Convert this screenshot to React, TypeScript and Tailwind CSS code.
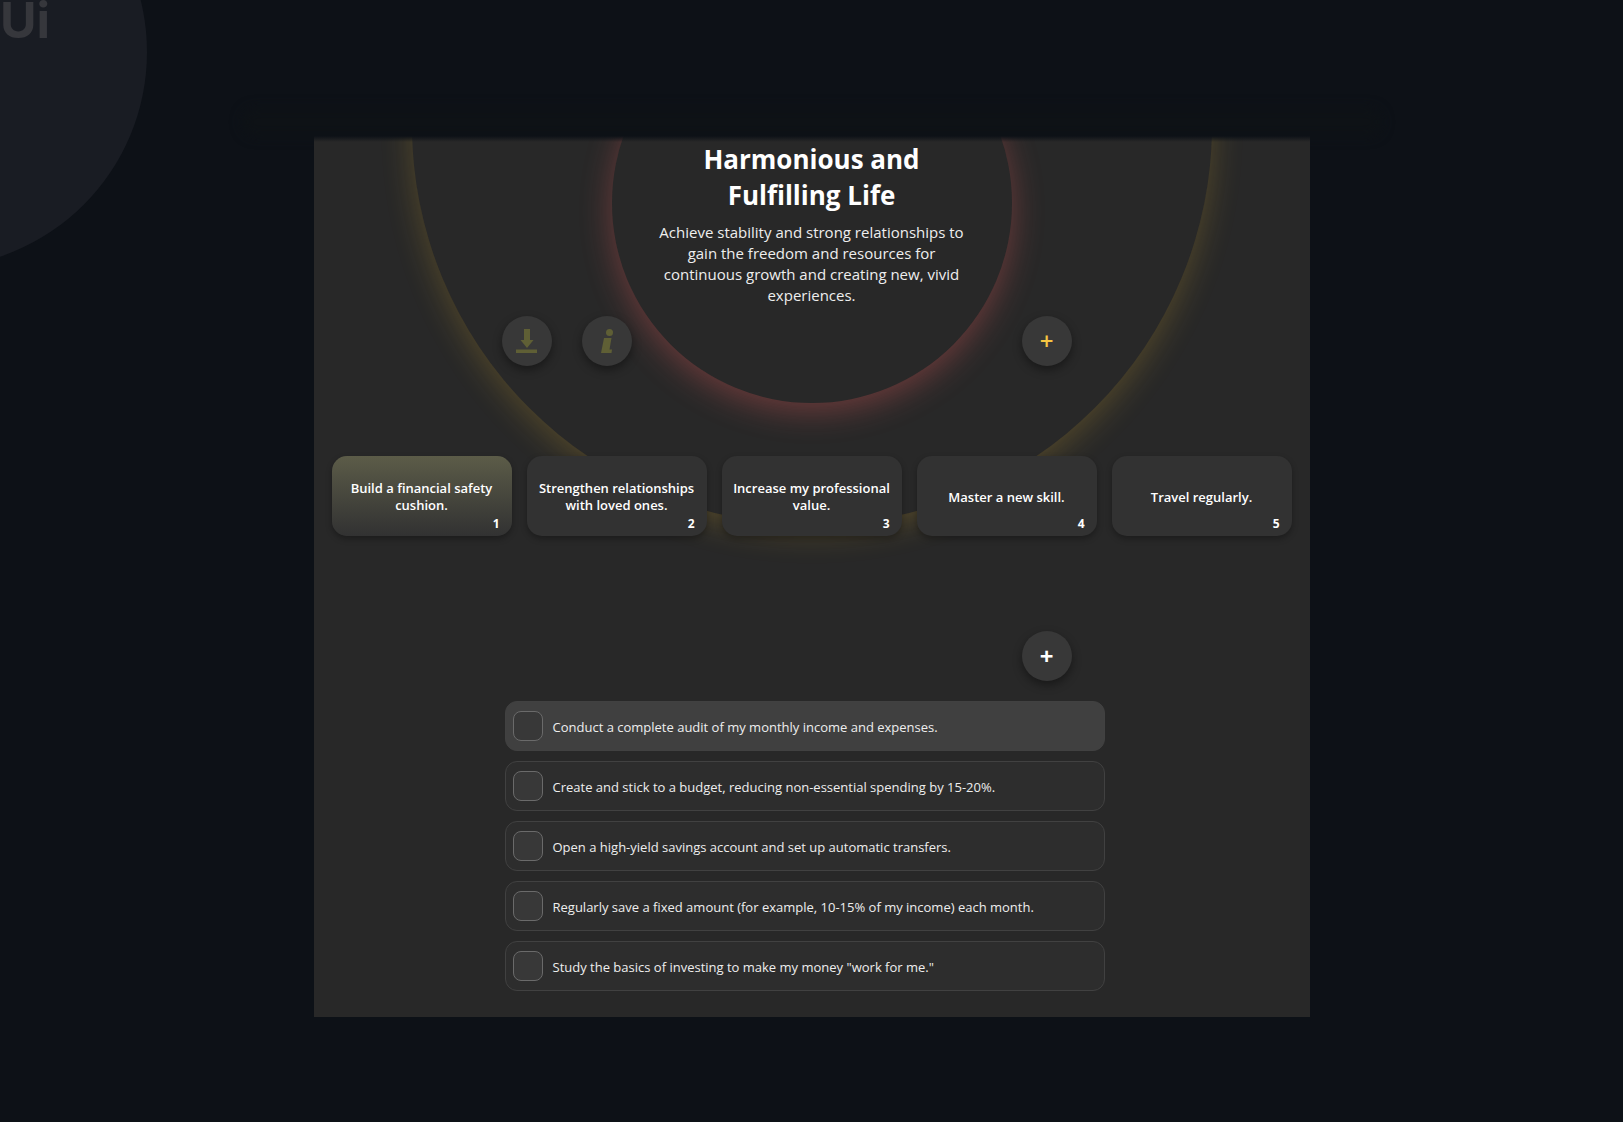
import React from "react";

const goals = [
  "Build a financial safety cushion.",
  "Strengthen relationships with loved ones.",
  "Increase my professional value.",
  "Master a new skill.",
  "Travel regularly.",
];

const tasks = [
  "Conduct a complete audit of my monthly income and expenses.",
  "Create and stick to a budget, reducing non-essential spending by 15-20%.",
  "Open a high-yield savings account and set up automatic transfers.",
  "Regularly save a fixed amount (for example, 10-15% of my income) each month.",
  'Study the basics of investing to make my money "work for me."',
];

function RoundButton({
  label,
  className = "",
  children,
}: {
  label: string;
  className?: string;
  children: React.ReactNode;
}) {
  return (
    <button
      type="button"
      aria-label={label}
      className={`flex size-[50px] shrink-0 items-center justify-center rounded-full bg-[#383838] shadow-[0_4px_10px_rgba(0,0,0,0.4)] ${className}`}
    >
      {children}
    </button>
  );
}

function GoalCard({ text, index, active }: { text: string; index: number; active: boolean }) {
  return (
    <button
      type="button"
      className={`relative flex h-20 flex-1 items-center justify-center rounded-[15px] px-2 pt-0.5 text-center text-[13px] leading-[17px] font-semibold text-white shadow-[0_3px_6px_rgba(0,0,0,0.3)] ${
        active ? "bg-linear-to-b from-[#5c5c48] to-[#323232]" : "bg-[#323232]"
      }`}
    >
      <span>{text}</span>
      <span className="absolute right-3 bottom-1 text-xs leading-4 font-bold">{index}</span>
    </button>
  );
}

function TaskRow({ text, active }: { text: string; active: boolean }) {
  return (
    <li>
      <label
        className={`flex h-[50px] items-center gap-[10px] rounded-xl border border-[#414141] px-[7px] ${
          active ? "bg-[#404040]" : "bg-[#2d2d2d]"
        }`}
      >
        <input
          type="checkbox"
          className="size-[30px] shrink-0 appearance-none rounded-lg border border-[#6a6a6a] bg-[#383838] checked:bg-[#5c5c30]"
        />
        <span className="pt-0.5 text-[13px] leading-5 text-[#eeeeee]">{text}</span>
      </label>
    </li>
  );
}

export default function App() {
  return (
    <div className="relative min-h-screen overflow-hidden bg-[#0d1117] pt-[136px] font-['Open_Sans','Noto_Sans',sans-serif] text-white">
      <div className="absolute -top-[164px] -left-[285px] size-[432px] rounded-full bg-[#191c23]" />
      <div className="absolute top-0 left-0 font-[Inter,sans-serif] text-[50px] leading-10 font-bold text-[#36373c]">
        Ui
      </div>
      <div className="absolute inset-x-0 top-[108px] mx-auto h-7 w-full max-w-[1140px] rounded-full bg-[#0e1216] blur-[6px]" />

      <main className="relative mx-auto w-full max-w-[996px] overflow-hidden bg-[#282828] px-[18px] pt-[5px] pb-[26px]">
        <div className="absolute -top-[411px] left-1/2 size-[800px] -translate-x-1/2 rounded-full bg-[#282828] shadow-[0_8px_32px_rgba(255,200,50,0.2)]" />
        <div className="absolute -top-[133px] left-1/2 size-[400px] -translate-x-1/2 rounded-full bg-[#282828] shadow-[0_8px_32px_rgba(255,100,100,0.32)]" />
        <div className="absolute inset-x-0 top-0 h-1.5 bg-linear-to-b from-[#0d1117] to-transparent" />

        <header className="relative mx-auto w-full max-w-[320px] text-center">
          <h1 className="text-[26px] leading-9 font-bold">
            Harmonious and
            <br />
            Fulfilling Life
          </h1>
          <p className="mt-[9px] text-[15px] leading-[21px] text-[#eeeeee]">
            Achieve stability and strong relationships to gain the freedom and resources for continuous growth and
            creating new, vivid experiences.
          </p>
        </header>

        <div className="relative mt-[10px] flex gap-[30px] pr-[220px] pl-[170px]">
          <RoundButton label="Download">
            <svg width="21" height="24" viewBox="0 0 21 24" fill="#5f5f35">
              <path d="M8 0h6v11h3.500L11 19l-6.500-8H8zM0 20.500h21V24H0z" />
            </svg>
          </RoundButton>
          <RoundButton label="Info">
            <svg width="12" height="24" viewBox="0 0 12 24" fill="#5f5f35">
              <circle cx="8.500" cy="3.500" r="3.500" />
              <path d="M3 9h7.500L8.500 20.500h2.500L10.500 24H0z" />
            </svg>
          </RoundButton>
          <RoundButton label="Add goal" className="ml-auto text-2xl font-semibold text-[#f5c542]">
            +
          </RoundButton>
        </div>

        <div className="relative mt-[90px] flex gap-[15px]">
          {goals.map((goal, i) => (
            <GoalCard key={goal} text={goal} index={i + 1} active={i === 0} />
          ))}
        </div>

        <div className="relative mt-[95px] flex justify-end pr-[220px]">
          <RoundButton label="Add task" className="text-2xl font-bold text-white">
            +
          </RoundButton>
        </div>

        <div className="relative mt-5 pr-[14px]">
          <ul className="mx-auto flex w-full max-w-[600px] flex-col gap-[10px]">
            {tasks.map((task, i) => (
              <TaskRow key={task} text={task} active={i === 0} />
            ))}
          </ul>
        </div>
      </main>
    </div>
  );
}
